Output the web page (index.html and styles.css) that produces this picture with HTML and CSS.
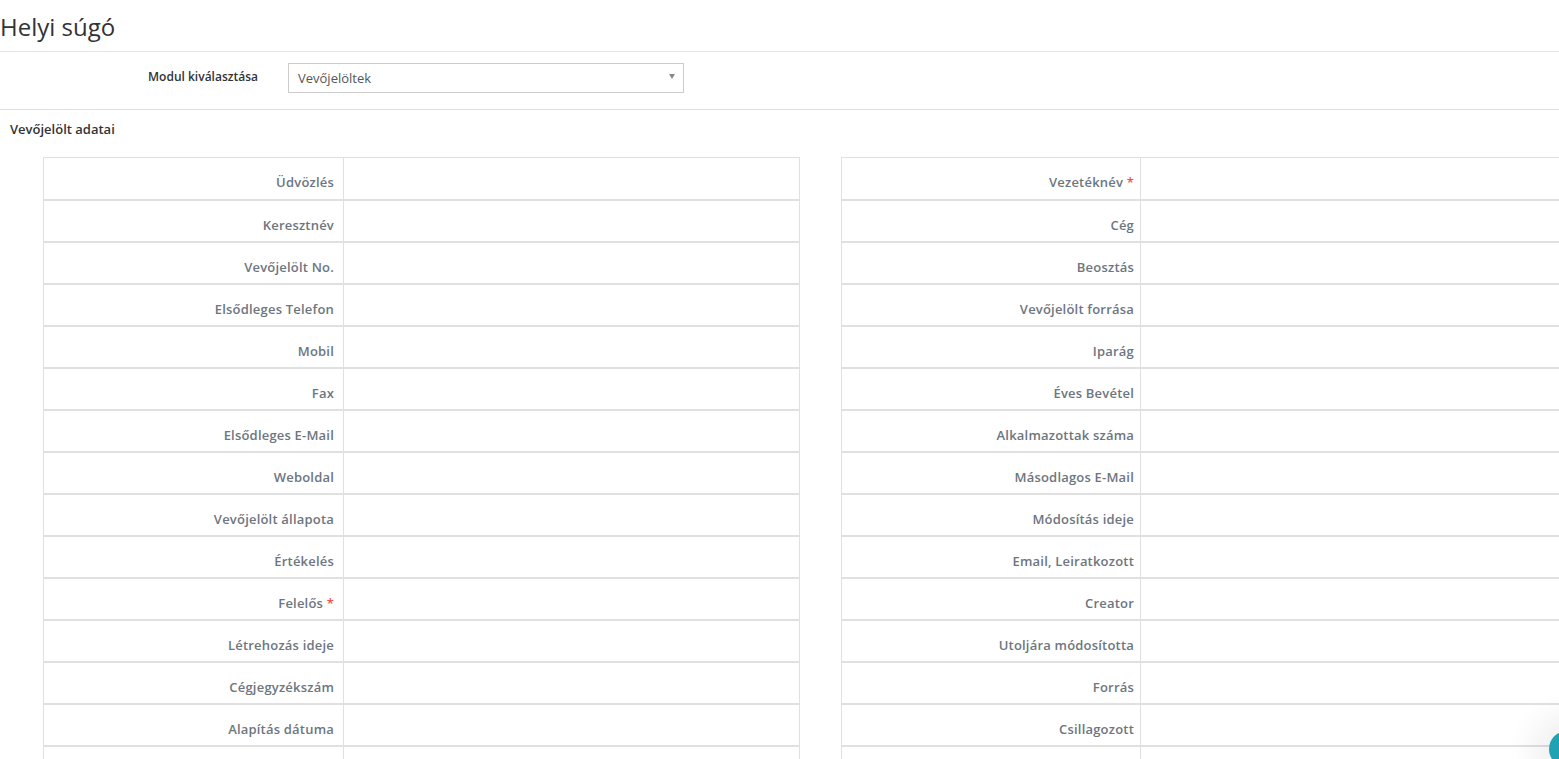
FILE: index.html
```html
<!DOCTYPE html>
<html lang="hu">
<head>
    <meta charset="UTF-8">
    <meta name="viewport" content="width=device-width, initial-scale=1.0">
    <title>Helyi súgó</title>
    <link rel="stylesheet" href="styles.css">
</head>
<body>
<div class="page">
    <div class="page-header">
        <h1>Helyi súgó</h1>
    </div>

    <div class="module-row">
        <label class="module-label">Modul kiválasztása</label>
        <div class="select">
            <span>Vevőjelöltek</span>
            <span class="caret"></span>
        </div>
    </div>

    <div class="block-title">Vevőjelölt adatai</div>

    <div class="fields">
        <table class="field-table">
            <tr><td class="label">Üdvözlés</td><td></td></tr>
            <tr><td class="label">Keresztnév</td><td></td></tr>
            <tr><td class="label">Vevőjelölt No.</td><td></td></tr>
            <tr><td class="label">Elsődleges Telefon</td><td></td></tr>
            <tr><td class="label">Mobil</td><td></td></tr>
            <tr><td class="label">Fax</td><td></td></tr>
            <tr><td class="label">Elsődleges E-Mail</td><td></td></tr>
            <tr><td class="label">Weboldal</td><td></td></tr>
            <tr><td class="label">Vevőjelölt állapota</td><td></td></tr>
            <tr><td class="label">Értékelés</td><td></td></tr>
            <tr><td class="label">Felelős <span class="req">*</span></td><td></td></tr>
            <tr><td class="label">Létrehozás ideje</td><td></td></tr>
            <tr><td class="label">Cégjegyzékszám</td><td></td></tr>
            <tr><td class="label">Alapítás dátuma</td><td></td></tr>
            <tr><td class="label">&nbsp;</td><td></td></tr>
        </table>

        <table class="field-table">
            <tr><td class="label">Vezetéknév <span class="req">*</span></td><td></td></tr>
            <tr><td class="label">Cég</td><td></td></tr>
            <tr><td class="label">Beosztás</td><td></td></tr>
            <tr><td class="label">Vevőjelölt forrása</td><td></td></tr>
            <tr><td class="label">Iparág</td><td></td></tr>
            <tr><td class="label">Éves Bevétel</td><td></td></tr>
            <tr><td class="label">Alkalmazottak száma</td><td></td></tr>
            <tr><td class="label">Másodlagos E-Mail</td><td></td></tr>
            <tr><td class="label">Módosítás ideje</td><td></td></tr>
            <tr><td class="label">Email, Leiratkozott</td><td></td></tr>
            <tr><td class="label">Creator</td><td></td></tr>
            <tr><td class="label">Utoljára módosította</td><td></td></tr>
            <tr><td class="label">Forrás</td><td></td></tr>
            <tr><td class="label">Csillagozott</td><td></td></tr>
            <tr><td class="label">&nbsp;</td><td></td></tr>
        </table>
    </div>
</div>

<div class="float-btn"></div>
</body>
</html>
```

FILE: styles.css
```css
html, body {
    margin: 0;
    height: 100%;
    overflow: hidden;
}

body {
    font-family: "Open Sans", "Noto Sans", sans-serif;
    color: #333;
    background: #fff;
}

.page-header {
    height: 51px;
    border-bottom: 1px solid #e7e7e7;
    display: flex;
    align-items: center;
}

.page-header h1 {
    margin: 0;
    font-size: 24px;
    font-weight: 400;
    color: #333;
    line-height: 1;
    padding-top: 2px;
}

.module-row {
    display: flex;
    align-items: flex-start;
    height: 58px;
    padding-top: 11px;
    box-sizing: border-box;
    border-bottom: 1px solid #e0e0e0;
}

.module-label {
    width: 258px;
    text-align: right;
    font-size: 12px;
    font-weight: 600;
    color: #333;
    line-height: 16px;
    padding-top: 6px;
}

.select {
    margin-left: 30px;
    width: 396px;
    height: 30px;
    border: 1px solid #ccc;
    display: flex;
    align-items: center;
    justify-content: space-between;
    padding: 0 8px 0 9px;
    box-sizing: border-box;
    font-size: 13px;
    color: #555;
}

.caret {
    width: 0;
    height: 0;
    border-left: 3px solid transparent;
    border-right: 3px solid transparent;
    border-top: 5px solid #888;
    margin-top: -3px;
}

.block-title {
    font-size: 13px;
    font-weight: 600;
    color: #333;
    padding: 10px 10px 0;
    height: 47px;
    box-sizing: border-box;
}

.fields {
    display: flex;
    gap: 41px;
    padding-left: 43px;
}

.field-table {
    flex: 0 0 757px;
    width: 757px;
    border-collapse: collapse;
    border-top: 1px solid #e0e0e0;
}

.field-table td {
    border-left: 1px solid #e0e0e0;
    border-right: 1px solid #e0e0e0;
    border-bottom: 2px solid #e0e0e0;
    height: 42px;
    padding: 0;
    box-sizing: border-box;
}

.field-table td.label {
    width: 300px;
    text-align: right;
    font-size: 13px;
    font-weight: 600;
    letter-spacing: 0.2px;
    color: #6d7680;
    padding: 14px 9px 0 10px;
    line-height: 20px;
    vertical-align: top;
}

.field-table + .field-table td.label {
    width: 299px;
    padding-right: 6px;
}

.req {
    color: #ef5350;
}

.float-btn {
    position: fixed;
    right: -26px;
    bottom: -8px;
    width: 36px;
    height: 36px;
    border-radius: 50%;
    background: #1fa2b4;
    box-shadow: 0 0 30px 18px rgba(0, 0, 0, 0.06);
}
```
